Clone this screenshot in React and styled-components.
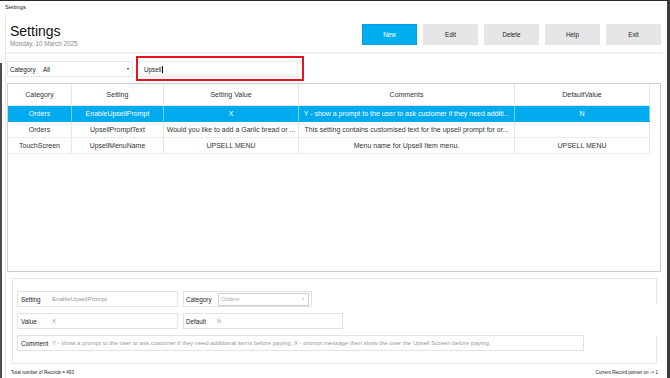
import React from 'react';
import styled, { createGlobalStyle } from 'styled-components';

const GlobalStyle = createGlobalStyle`
  html, body {
    margin: 0;
    padding: 0;
    background: #fff;
  }
  body {
    font-family: "Liberation Sans", Arial, sans-serif;
    color: #333;
  }
  * {
    box-sizing: border-box;
  }
`;

const columns = [
  { key: 'category', title: 'Category', width: 64 },
  { key: 'setting', title: 'Setting', width: 92 },
  { key: 'value', title: 'Setting Value', width: 135 },
  { key: 'comments', title: 'Comments', width: 216 },
  { key: 'defaultValue', title: 'DefaultValue', width: 135 },
];

const rows = [
  {
    category: 'Orders',
    setting: 'EnableUpsellPrompt',
    value: 'X',
    comments: 'Y - show a prompt to the user to ask customer if they need additi...',
    defaultValue: 'N',
  },
  {
    category: 'Orders',
    setting: 'UpsellPromptText',
    value: 'Would you like to add a Garlic bread or ...',
    comments: 'This setting contains customised text for the upsell prompt for or...',
    defaultValue: '',
  },
  {
    category: 'TouchScreen',
    setting: 'UpsellMenuName',
    value: 'UPSELL MENU',
    comments: 'Menu name for Upsell Item menu.',
    defaultValue: 'UPSELL MENU',
  },
];

const current = {
  setting: 'EnableUpsellPrompt',
  category: 'Orders',
  value: 'X',
  defaultValue: 'N',
  comment:
    'Y - show a prompt to the user to ask customer if they need additional items before paying. X - prompt message then show the user the Upsell Screen before paying.',
};

const buttons = ['New', 'Edit', 'Delete', 'Help', 'Exit'];

const App = () => {
  return (
    <>
      <GlobalStyle />
      <Window>
        <TitleBar>Settings</TitleBar>
        <Body>
          <Header>
            <HeadingBlock>
              <Heading>Settings</Heading>
              <DateText>Monday, 10 March 2025</DateText>
            </HeadingBlock>
            <ButtonBar>
              {buttons.map((b, i) => (
                <ActionButton key={b} $primary={i === 0}>
                  {b}
                </ActionButton>
              ))}
            </ButtonBar>
          </Header>
          <Separator />

          <FilterRow>
            <CategoryFilter>
              <FilterLabel>Category</FilterLabel>
              <FilterValue>All</FilterValue>
              <DropArrow />
            </CategoryFilter>
            <SearchHighlight>
              <SearchInput>
                Upsell<Caret />
              </SearchInput>
            </SearchHighlight>
          </FilterRow>

          <Grid>
            <HeaderRow>
              {columns.map((c) => (
                <Cell key={c.key} $width={c.width}>
                  {c.title}
                </Cell>
              ))}
            </HeaderRow>
            {rows.map((r, i) => (
              <Row key={r.setting} $selected={i === 0}>
                {columns.map((c) => (
                  <Cell key={c.key} $width={c.width}>
                    {r[c.key]}
                  </Cell>
                ))}
              </Row>
            ))}
          </Grid>

          <DetailPanel>
            <FieldRow>
              <Field $width={161}>
                <FieldLabel>Setting</FieldLabel>
                <FieldValue>{current.setting}</FieldValue>
              </Field>
              <Field $width={129} $pad={2}>
                <FieldLabel $width={32}>Category</FieldLabel>
                <SelectBox>
                  {current.category}
                  <SelectArrow />
                </SelectBox>
              </Field>
            </FieldRow>
            <FieldRow>
              <Field $width={161}>
                <FieldLabel>Value</FieldLabel>
                <FieldValue>{current.value}</FieldValue>
              </Field>
              <Field $width={160} $pad={2}>
                <FieldLabel $width={31}>Default</FieldLabel>
                <FieldValue>{current.defaultValue}</FieldValue>
              </Field>
            </FieldRow>
            <FieldRow>
              <Field $width={567}>
                <FieldLabel>Comment</FieldLabel>
                <FieldValue>{current.comment}</FieldValue>
              </Field>
            </FieldRow>
          </DetailPanel>

          <Footer>
            <span>Total number of Records = 493</span>
            <span>Current Record pointer on -&gt; 1</span>
          </Footer>
        </Body>
        <LeftFrame />
        <FrameGap />
      </Window>
    </>
  );
};

const Window = styled.div`
  position: relative;
  width: 670px;
  height: 378px;
  background: #fff;
  border-top: 1px solid #2a2a2a;
  border-right: 3px solid #3a3a3a;
  display: flex;
  flex-direction: column;
  overflow: hidden;
`;

const TitleBar = styled.div`
  height: 13px;
  line-height: 13px;
  padding-left: 5px;
  font-size: 5.8px;
  color: #222;
`;

const Body = styled.div`
  flex: 1;
  display: flex;
  flex-direction: column;
  margin-left: 5px;
  border-left: 1px solid #e6e6e6;
`;

const Header = styled.div`
  height: 38px;
  display: flex;
  justify-content: space-between;
  align-items: flex-start;
  padding: 0 6px 0 4px;
`;

const HeadingBlock = styled.div`
  padding-top: 9px;
`;

const Heading = styled.h1`
  margin: 0;
  font-size: 14px;
  line-height: 16px;
  font-weight: normal;
  color: #111;
`;

const DateText = styled.div`
  margin-top: 1px;
  font-size: 6.3px;
  line-height: 8px;
  color: #8a8a8a;
`;

const ButtonBar = styled.div`
  display: flex;
  gap: 6px;
  margin-top: 10px;
`;

const ActionButton = styled.button`
  width: 55px;
  height: 21px;
  padding: 0;
  border: 1px solid ${(p) => (p.$primary ? '#0a9fdc' : '#e6e6e6')};
  background: ${(p) => (p.$primary ? '#00aeef' : '#e6e6e6')};
  color: ${(p) => (p.$primary ? '#fff' : '#222')};
  font-family: inherit;
  font-size: 6.3px;
  cursor: pointer;
`;

const Separator = styled.div`
  height: 2px;
  margin-right: 4px;
  background: #f0f0f0;
`;

const FilterRow = styled.div`
  height: 25px;
  margin-top: 2px;
  display: flex;
  align-items: flex-start;
  padding-left: 1px;
`;

const CategoryFilter = styled.div`
  width: 126px;
  height: 16px;
  margin-top: 5px;
  border: 1px solid #e6e6e6;
  display: flex;
  align-items: center;
  padding: 0 3px 0 2px;
  font-size: 6.3px;
  color: #222;
`;

const FilterLabel = styled.span`
  width: 33px;
`;

const FilterValue = styled.span`
  flex: 1;
`;

const DropArrow = styled.span`
  width: 0;
  height: 0;
  border-left: 1.5px solid transparent;
  border-right: 1.5px solid transparent;
  border-top: 2px solid #222;
`;

const SearchHighlight = styled.div`
  width: 168px;
  height: 25px;
  margin-left: 3px;
  border: 2px solid #e3141c;
  padding: 3px 4px 2px 1px;
`;

const SearchInput = styled.div`
  height: 16px;
  border: 1px solid #ececec;
  display: flex;
  align-items: center;
  padding-left: 4px;
  font-size: 6.3px;
  color: #222;
`;

const Caret = styled.span`
  width: 1px;
  height: 7px;
  margin-left: 0.5px;
  background: #111;
`;

const Grid = styled.div`
  height: 189px;
  margin: 2px 6px 0 1px;
  border: 1px solid #cdcdcd;
  background: #fff;
`;

const HeaderRow = styled.div`
  display: flex;
  width: max-content;
  height: 22px;
  border-bottom: 1px solid #e6e6e6;
  color: #333;
  line-height: 21px;
`;

const Row = styled.div`
  display: flex;
  width: max-content;
  height: 16px;
  line-height: 15px;
  border-bottom: 1px solid ${(p) => (p.$selected ? '#00aaef' : '#ececec')};
  background: ${(p) => (p.$selected ? '#00aaef' : '#fff')};
  color: ${(p) => (p.$selected ? '#fff' : '#333')};

  & > div {
    border-right-color: ${(p) => (p.$selected ? 'rgba(255,255,255,0.45)' : '#e6e6e6')};
  }
`;

const Cell = styled.div`
  width: ${(p) => p.$width}px;
  flex: none;
  padding: 0 2px;
  border-right: 1px solid #e6e6e6;
  font-size: 7px;
  text-align: center;
  white-space: nowrap;
  overflow: hidden;
  text-overflow: ellipsis;
`;

const DetailPanel = styled.div`
  height: 86px;
  margin: 6px 10px 0 6px;
  border: 1px solid #e6e6e6;
  padding: 12px 4px 0 4px;
  display: flex;
  flex-direction: column;
  gap: 6px;
`;

const FieldRow = styled.div`
  display: flex;
  gap: 5px;
`;

const Field = styled.div`
  width: ${(p) => p.$width}px;
  height: 16px;
  border: 1px solid #e2e2e2;
  display: flex;
  align-items: center;
  padding-left: ${(p) => p.$pad ?? 3}px;
  font-size: 6.3px;
  overflow: hidden;
  white-space: nowrap;
`;

const FieldLabel = styled.span`
  width: ${(p) => p.$width ?? 31}px;
  flex: none;
  color: #222;
`;

const FieldValue = styled.span`
  font-size: 6.05px;
  color: #999;
  overflow: hidden;
  text-overflow: ellipsis;
`;

const SelectBox = styled.div`
  width: 91px;
  height: 13px;
  border: 1px solid #cfcfcf;
  display: flex;
  align-items: center;
  justify-content: space-between;
  padding: 0 4px 0 2px;
  font-size: 6.05px;
  color: #aaa;
`;

const SelectArrow = styled.span`
  width: 0;
  height: 0;
  border-left: 1.5px solid transparent;
  border-right: 1.5px solid transparent;
  border-top: 2px solid #bbb;
`;

const Footer = styled.div`
  flex: 1;
  display: flex;
  justify-content: space-between;
  align-items: flex-start;
  padding: 6px 9px 0 5px;
  font-size: 4.6px;
  line-height: 6px;
  color: #222;
`;

const LeftFrame = styled.div`
  position: absolute;
  left: 0;
  top: 62px;
  bottom: 0;
  width: 2px;
  background: #4d4d4d;
`;

const FrameGap = styled.div`
  position: absolute;
  right: -3px;
  top: 303px;
  width: 16px;
  height: 32px;
  background: #fff;
`;

export default App;
